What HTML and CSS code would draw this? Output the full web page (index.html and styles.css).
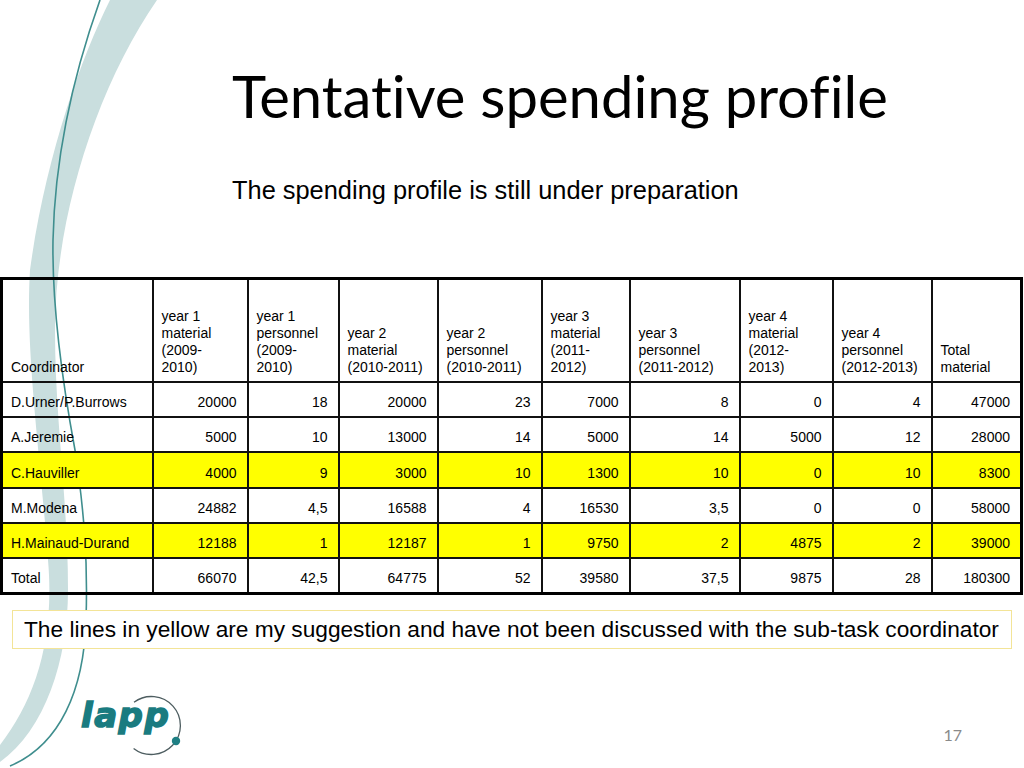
FILE: index.html
```html
<!DOCTYPE html>
<html lang="en">
<head>
<meta charset="utf-8">
<title>Tentative spending profile</title>
<link rel="stylesheet" href="styles.css">
</head>
<body>
<div class="slide">
  <svg class="deco" width="200" height="768" viewBox="0 0 200 768" aria-hidden="true">
    <path class="deco-band" d="M110,0 C80,60 45,160 30,270 C25,350 40,450 48,560 C55,640 35,700 0,745 L0,762 C45,730 68,660 68,590 C68,500 55,420 55,330 C55,220 95,90 157,0 Z"/>
    <path class="deco-line" d="M100,0 C75,70 55,150 53,240 C52,300 62,380 75,450 C84,510 88,560 86,620 C84,690 60,745 10,766"/>
  </svg>

  <h1 class="title">Tentative spending profile</h1>
  <p class="subtitle">The spending profile is still under preparation</p>

  <table class="budget">
    <colgroup>
      <col class="c-name"><col class="c2"><col class="c3"><col class="c4"><col class="c5">
      <col class="c6"><col class="c7"><col class="c8"><col class="c9"><col class="c10">
    </colgroup>
    <thead>
      <tr class="head">
        <th>Coordinator</th>
        <th>year 1<br>material<br>(2009-<br>2010)</th>
        <th>year 1<br>personnel<br>(2009-<br>2010)</th>
        <th>year 2<br>material<br>(2010-2011)</th>
        <th>year 2<br>personnel<br>(2010-2011)</th>
        <th>year 3<br>material<br>(2011-<br>2012)</th>
        <th>year 3<br>personnel<br>(2011-2012)</th>
        <th>year 4<br>material<br>(2012-<br>2013)</th>
        <th>year 4<br>personnel<br>(2012-2013)</th>
        <th>Total<br>material</th>
      </tr>
    </thead>
    <tbody>
      <tr class="row">
        <td>D.Urner/P.Burrows</td><td>20000</td><td>18</td><td>20000</td><td>23</td><td>7000</td><td>8</td><td>0</td><td>4</td><td>47000</td>
      </tr>
      <tr class="row">
        <td>A.Jeremie</td><td>5000</td><td>10</td><td>13000</td><td>14</td><td>5000</td><td>14</td><td>5000</td><td>12</td><td>28000</td>
      </tr>
      <tr class="row row-tall hl">
        <td>C.Hauviller</td><td>4000</td><td>9</td><td>3000</td><td>10</td><td>1300</td><td>10</td><td>0</td><td>10</td><td>8300</td>
      </tr>
      <tr class="row">
        <td>M.Modena</td><td>24882</td><td>4,5</td><td>16588</td><td>4</td><td>16530</td><td>3,5</td><td>0</td><td>0</td><td>58000</td>
      </tr>
      <tr class="row hl">
        <td>H.Mainaud-Durand</td><td>12188</td><td>1</td><td>12187</td><td>1</td><td>9750</td><td>2</td><td>4875</td><td>2</td><td>39000</td>
      </tr>
      <tr class="row row-tall">
        <td>Total</td><td>66070</td><td>42,5</td><td>64775</td><td>52</td><td>39580</td><td>37,5</td><td>9875</td><td>28</td><td>180300</td>
      </tr>
    </tbody>
  </table>

  <div class="note">The lines in yellow are my suggestion and have not been discussed with the sub-task coordinator</div>

  <footer class="footer">
    <div class="logo">
      <svg class="logo-ring" width="112" height="66" viewBox="0 0 112 66" aria-hidden="true">
        <path d="M59,8.3 A29,29 0 1,1 58.6,54.4" fill="none" stroke="#4d5d60" stroke-width="1.3"/>
        <circle cx="101" cy="47" r="4.2" fill="#1f7f84"/>
      </svg>
      <span class="logo-text">lapp</span>
    </div>
    <span class="page">17</span>
  </footer>
</div>
</body>
</html>
```

FILE: styles.css
```css
html, body {
  margin: 0;
  padding: 0;
  background: #ffffff;
}

.slide {
  position: relative;
  z-index: 0;
  width: 1024px;
  height: 768px;
  overflow: hidden;
  background: #ffffff;
  font-family: "Liberation Sans", Arial, sans-serif;
  color: #000;
}

.deco {
  position: absolute;
  top: 0;
  left: 0;
  z-index: -1;
}

.deco-band {
  fill: #c9dede;
}

.deco-line {
  fill: none;
  stroke: #3f8e8e;
  stroke-width: 1.6;
}

.title {
  margin: 0;
  padding: 60px 0 0 232px;
  font-family: "Lato", "Open Sans", sans-serif;
  font-weight: 400;
  font-size: 58px;
  line-height: 72px;
  font-variant-ligatures: none;
  white-space: nowrap;
}

.subtitle {
  margin: 43px 0 0 0;
  padding-left: 232px;
  font-size: 25.4px;
  line-height: 30px;
  white-space: nowrap;
}

.budget {
  margin-top: 72px;
  width: 1023px;
  table-layout: fixed;
  border-collapse: collapse;
  border: 3px solid #000;
  font-size: 14px;
  line-height: 17px;
}

.c-name { width: 151px; }
.c2 { width: 95px; }
.c3 { width: 91px; }
.c4 { width: 99px; }
.c5 { width: 104px; }
.c6 { width: 88px; }
.c7 { width: 110px; }
.c8 { width: 93px; }
.c9 { width: 99px; }
.c10 { width: 90px; }

.budget th,
.budget td {
  border: 2px solid #111;
  padding: 0 10px 5px 8px;
  vertical-align: bottom;
  white-space: nowrap;
  overflow: hidden;
}

.budget th {
  font-weight: 400;
  text-align: left;
}

.budget td {
  text-align: right;
}

.budget td:first-child {
  text-align: left;
}

.head {
  height: 103px;
}

.row {
  height: 35px;
}

.row-tall {
  height: 36px;
}

.hl td {
  background: #ffff00;
}

.note {
  margin: 15px 0 0 12px;
  width: 1000px;
  box-sizing: border-box;
  height: 39px;
  border: 1.5px solid #f3e497;
  background: #ffffff;
  padding: 0 0 0 11px;
  font-size: 22.7px;
  line-height: 36px;
  white-space: nowrap;
}

.footer {
  display: flex;
  align-items: flex-start;
  margin-top: 45px;
  padding-left: 75px;
}

.logo {
  position: relative;
  width: 112px;
  height: 66px;
}

.logo-ring {
  position: absolute;
  top: 0;
  left: 0;
}

.logo-text {
  position: relative;
  display: block;
  padding: 3px 0 0 6px;
  font-family: "DejaVu Sans", sans-serif;
  font-weight: 700;
  font-style: oblique;
  font-size: 34px;
  line-height: 36px;
  letter-spacing: 1.5px;
  color: #1a7b80;
  -webkit-text-stroke: 1.5px #1a7b80;
}

.page {
  margin: 31px 62px 0 auto;
  font-family: "Lato", "Open Sans", sans-serif;
  font-size: 16px;
  line-height: 20px;
  color: #8a8a8a;
}
```
